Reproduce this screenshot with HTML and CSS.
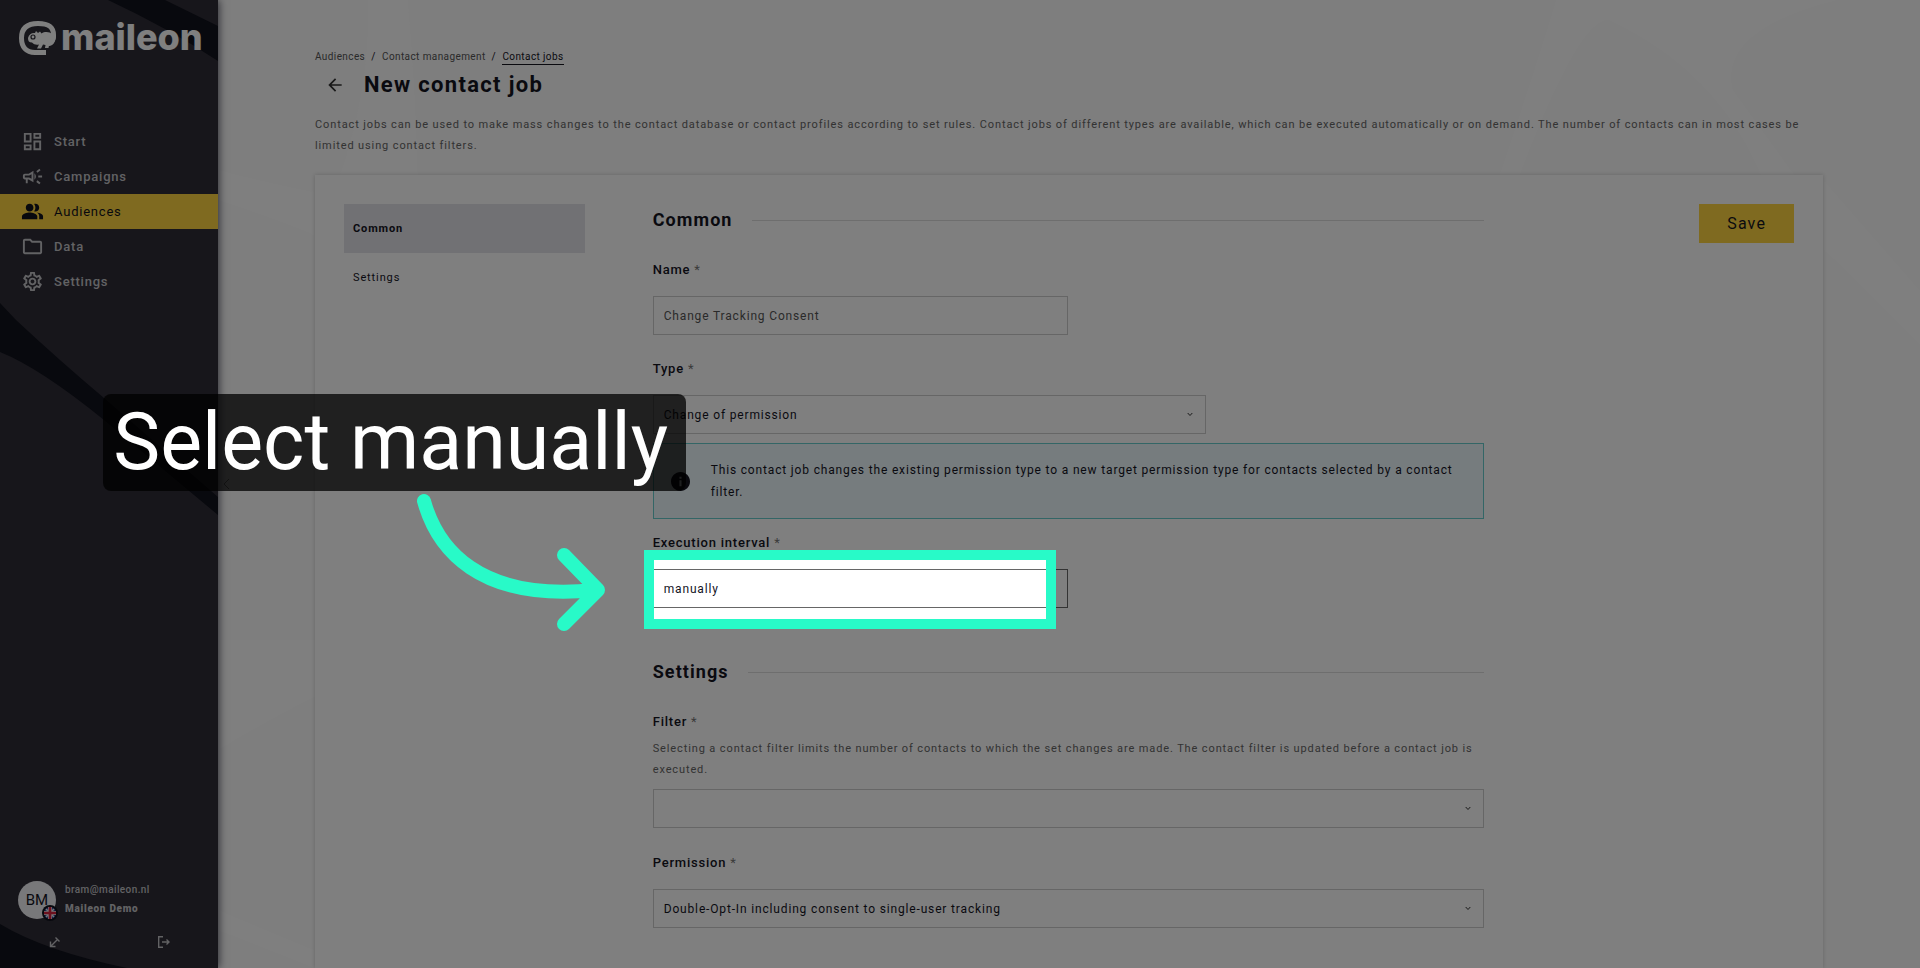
FILE: index.html
```html
<!DOCTYPE html>
<html lang="en">
<head>
<meta charset="utf-8">
<title>New contact job</title>
<link rel="stylesheet" href="styles.css">
</head>
<body>
<div class="app">
  <aside class="sidebar">
    <svg class="sidebar-art" viewBox="0 0 218 968" preserveAspectRatio="none" aria-hidden="true">
      <path d="M108 0H165L218 26V61Q168 28 108 0Z"/>
      <path d="M0 303L16 320Q60 361 104 398L218 497V515L104 420Q40 368 0 352Z"/>
      <path d="M0 924Q45 951 127 968H0Z"/>
    </svg>
    <a class="logo" href="#">
      <svg class="logo-mark" viewBox="0 0 38 36" aria-hidden="true">
        <path class="logo-ring" d="M27 32.500H16C7 32.500 2.500 27 2.500 18C2.500 8 8 3.500 19 3.500C30 3.500 34.500 7 34.500 15C34.500 21 32 24 27 24"/>
        <path class="logo-body" d="M9 18C10 14 13 12.500 16 13L17 11L19 13L21 11.500L22.500 13.500C26 11 31 12 33 14L37 15C37 21 34 25 30 25L29.500 28H26L26.500 25L24 24.500L22 28.500H18L20 24.500C17 25 15 24.500 13 22.500C10 22.500 9 21 9 18Z"/>
        <circle class="logo-eye" cx="14" cy="17" r="2"/>
      </svg>
      <span class="logo-text">maileon</span>
    </a>
    <nav class="nav">
      <a class="nav-item" href="#"><svg viewBox="0 0 24 24" aria-hidden="true"><path d="M19 5v2h-4V5h4M9 5v6H5V5h4m10 8v6h-4v-6h4M9 17v2H5v-2h4M21 3h-8v6h8V3zM11 3H3v10h8V3zm10 8h-8v10h8V11zm-10 4H3v6h8v-6z"/></svg>Start</a>
      <a class="nav-item" href="#"><svg viewBox="0 0 24 24" aria-hidden="true"><path d="M18 11v2h4v-2h-4zm-2 6.610c.96.710 2.210 1.650 3.200 2.390.4-.530.800-1.070 1.200-1.600-.990-.740-2.240-1.680-3.200-2.400-.4.540-.8 1.080-1.200 1.610zM20.400 5.600c-.4-.530-.8-1.070-1.200-1.600-.990.740-2.240 1.680-3.200 2.400.4.530.8 1.070 1.200 1.600.96-.720 2.210-1.650 3.200-2.400zM4 9c-1.100 0-2 .9-2 2v2c0 1.100.9 2 2 2h1v4h2v-4h1l5 3V6L8 9H4zm5.030 1.710L11 9.530v4.940l-1.970-1.180-.480-.290H4v-2h4.550l.480-.290zM15.500 12c0-1.330-.580-2.530-1.500-3.350v6.690c.920-.810 1.500-2.010 1.500-3.340z"/></svg>Campaigns</a>
      <a class="nav-item nav-active" href="#" aria-current="page"><svg viewBox="0 0 24 24" aria-hidden="true"><path d="M16.670 13.130C18.040 14.060 19 15.320 19 17v3h4v-3c0-2.180-3.570-3.470-6.330-3.870zM15 12c2.210 0 4-1.790 4-4s-1.790-4-4-4c-.470 0-.910.100-1.330.240C14.500 5.270 15 6.580 15 8s-.5 2.730-1.330 3.760c.420.140.860.240 1.330.240zM9 12c2.210 0 4-1.790 4-4s-1.790-4-4-4-4 1.790-4 4 1.790 4 4 4zm0 1c-2.670 0-8 1.340-8 4v3h16v-3c0-2.660-5.330-4-8-4z"/></svg>Audiences</a>
      <a class="nav-item" href="#"><svg viewBox="0 0 24 24" aria-hidden="true"><path d="M9.170 6l2 2H20v10H4V6h5.170M10 4H4c-1.100 0-1.990.9-1.990 2L2 18c0 1.100.9 2 2 2h16c1.100 0 2-.9 2-2V8c0-1.100-.9-2-2-2h-8l-2-2z"/></svg>Data</a>
      <a class="nav-item" href="#"><svg viewBox="0 0 24 24" aria-hidden="true"><path d="M19.430 12.980c.040-.320.070-.640.070-.980s-.030-.660-.070-.980l2.110-1.650c.190-.150.240-.420.120-.640l-2-3.460c-.090-.160-.260-.250-.440-.250-.060 0-.120.010-.170.030l-2.490 1c-.520-.4-1.080-.730-1.690-.980l-.380-2.650C14.460 2.180 14.250 2 14 2h-4c-.250 0-.460.180-.490.420l-.380 2.650c-.610.250-1.170.590-1.690.980l-2.490-1c-.060-.020-.120-.030-.180-.030-.170 0-.340.090-.430.250l-2 3.460c-.130.220-.070.490.120.640l2.110 1.650c-.040.320-.070.650-.070.980s.030.660.070.980l-2.110 1.650c-.190.150-.240.420-.120.640l2 3.460c.090.160.260.250.440.250.060 0 .120-.010.170-.030l2.490-1c.520.4 1.080.730 1.690.980l.380 2.650c.030.240.240.420.490.420h4c.250 0 .460-.180.490-.420l.380-2.650c.610-.250 1.170-.590 1.690-.980l2.490 1c.060.020.120.030.180.030.170 0 .340-.090.430-.250l2-3.460c.120-.220.070-.490-.120-.640l-2.110-1.650zm-1.980-1.710c.040.310.050.520.050.730 0 .210-.020.430-.050.730l-.140 1.130.890.700 1.080.840-.7 1.210-1.270-.510-1.040-.420-.9.680c-.430.320-.840.560-1.250.730l-1.060.430-.160 1.130-.2 1.350h-1.400l-.190-1.350-.160-1.130-1.060-.430c-.430-.180-.830-.410-1.230-.710l-.910-.7-1.060.430-1.270.510-.7-1.210 1.080-.840.890-.7-.140-1.130c-.030-.310-.050-.540-.050-.740s.020-.430.050-.730l.140-1.130-.890-.7-1.080-.840.7-1.210 1.270.510 1.040.420.9-.680c.430-.320.840-.560 1.250-.730l1.060-.430.160-1.130.2-1.350h1.390l.190 1.350.160 1.130 1.060.430c.430.180.830.410 1.230.710l.910.7 1.060-.430 1.270-.510.7 1.210-1.070.850-.890.7.140 1.130zM12 8c-2.210 0-4 1.790-4 4s1.790 4 4 4 4-1.790 4-4-1.790-4-4-4zm0 6c-1.100 0-2-.9-2-2s.9-2 2-2 2 .9 2 2-.9 2-2 2z"/></svg>Settings</a>
    </nav>
    <div class="account">
      <div class="account-user">
        <div class="avatar">BM
          <svg class="flag" viewBox="0 0 16 16" role="img" aria-label="English">
            <circle cx="8" cy="8" r="8" fill="#10121c"/>
            <circle cx="8" cy="8" r="6" fill="#2a4a9c"/>
            <path d="M4 4L12 12M12 4L4 12" stroke="#e8e8ee" stroke-width="1.600"/>
            <path d="M8 2V14M2 8H14" stroke="#e8e8ee" stroke-width="4"/>
            <path d="M8 2V14M2 8H14" stroke="#d8203c" stroke-width="2.600"/>
          </svg>
        </div>
        <div class="account-names">
          <span>bram@maileon.nl</span>
          <strong>Maileon Demo</strong>
        </div>
      </div>
      <div class="account-actions">
        <button class="icon-button" type="button" aria-label="Collapse menu"><svg viewBox="0 0 12 12" aria-hidden="true"><path d="M6.500 1.500L10.500 5.500M8.500 3.500L2 10M1.500 5.500V10.500H6.500"/></svg></button>
        <button class="icon-button" type="button" aria-label="Log out"><svg viewBox="0 0 12 12" aria-hidden="true"><path d="M5 .7H.7V11.300H5M4 6H11M8.500 3.500L11 6L8.500 8.500"/></svg></button>
      </div>
    </div>
    <button class="handle" type="button" aria-label="Hide menu"><svg viewBox="0 0 8 12" aria-hidden="true"><path d="M7 1L2 6L7 11"/></svg></button>
  </aside>

  <main class="main">
    <svg class="main-art" viewBox="0 0 1702 968" preserveAspectRatio="none" aria-hidden="true">
      <path d="M1280 180Q1320 60 1338 0H1620Q1500 30 1515 90L1580 180H1545Q1500 70 1390 20Q1360 20 1300 180Z"/>
      <path d="M0 640H110V690Q50 720 0 750Z"/>
      <path d="M0 910L96 950V968L0 930Z"/>
      <path d="M0 170Q60 185 96 192V235Q60 220 0 200Z"/>
      <path d="M150 0H190Q198 90 200 180H120Q152 90 150 0Z"/>
      <path d="M1606 180L1702 290V345L1606 250Z"/>
    </svg>
    <header class="page-head">
      <nav class="crumbs" aria-label="Breadcrumb">
        <a href="#">Audiences</a><span>/</span><a href="#">Contact management</a><span>/</span><a class="crumb-current" href="#">Contact jobs</a>
      </nav>
      <div class="title-row">
        <a class="back" href="#" aria-label="Back"><svg viewBox="0 0 24 24" aria-hidden="true"><path d="M20 11H7.830l5.590-5.590L12 4l-8 8 8 8 1.410-1.410L7.830 13H20v-2z"/></svg></a>
        <h1>New contact job</h1>
      </div>
      <p class="intro">Contact jobs can be used to make mass changes to the contact database or contact profiles according to set rules. Contact jobs of different types are available, which can be executed automatically or on demand. The number of contacts can in most cases be limited using contact filters.</p>
    </header>

    <form class="card">
      <nav class="tabs" aria-label="Sections">
        <a class="tab tab-active" href="#common">Common</a>
        <a class="tab" href="#settings">Settings</a>
      </nav>
      <div class="fields">
        <h2 id="common">Common</h2>
        <div class="field">
          <label for="name">Name <i>*</i></label>
          <input class="control half" id="name" type="text" value="Change Tracking Consent">
        </div>
        <div class="field">
          <label for="type">Type <i>*</i></label>
          <div class="picker two-thirds">
            <select class="control" id="type"><option>Change of permission</option></select>
            <svg class="chevron" viewBox="0 0 6 5" aria-hidden="true"><path d="M.7 1L3 3.500L5.300 1"/></svg>
          </div>
        </div>
        <div class="notice">
          <svg viewBox="0 0 24 24" aria-hidden="true"><path d="M12 0C5.400 0 0 5.400 0 12s5.400 12 12 12 12-5.400 12-12S18.600 0 12 0zm1.300 18h-2.600v-7.500h2.600V18zm0-9.500h-2.600V6h2.600v2.500z"/></svg>
          <p>This contact job changes the existing permission type to a new target permission type for contacts selected by a contact filter.</p>
        </div>
        <div class="field field-interval">
          <label for="interval">Execution interval <i>*</i></label>
          <div class="picker half">
            <select class="control control-dark" id="interval"><option>manually</option></select>
            <svg class="chevron" viewBox="0 0 6 5" aria-hidden="true"><path d="M.7 1L3 3.500L5.300 1"/></svg>
            <div class="spotlight"></div>
            <div class="callout" role="note">Select manually</div>
            <svg class="arrow" viewBox="0 0 200 150" aria-hidden="true"><path d="M14 17C27 64 68 118 185 106M154 71L188 106L154 140"/></svg>
          </div>
        </div>
        <h2 id="settings">Settings</h2>
        <div class="field field-help">
          <label for="filter">Filter <i>*</i></label>
          <p class="help">Selecting a contact filter limits the number of contacts to which the set changes are made. The contact filter is updated before a contact job is executed.</p>
          <div class="picker">
            <select class="control" id="filter"><option></option></select>
            <svg class="chevron" viewBox="0 0 6 5" aria-hidden="true"><path d="M.7 1L3 3.500L5.300 1"/></svg>
          </div>
        </div>
        <div class="field">
          <label for="permission">Permission <i>*</i></label>
          <div class="picker">
            <select class="control" id="permission"><option>Double-Opt-In including consent to single-user tracking</option></select>
            <svg class="chevron" viewBox="0 0 6 5" aria-hidden="true"><path d="M.7 1L3 3.500L5.300 1"/></svg>
          </div>
        </div>
      </div>
      <button class="save" type="button">Save</button>
    </form>
  </main>
</div>
</body>
</html>
```
FILE: styles.css
```css
* { box-sizing: border-box; letter-spacing: .07em; }

body {
  margin: 0;
  font-family: Roboto, "Liberation Sans", sans-serif;
  font-size: 12px;
  color: #14141f;
  background: #fcfcfc;
}

a { color: inherit; text-decoration: none; }
h1, h2, p { margin: 0; }
h1, h2, label, .nav-item { letter-spacing: .06em; }
button { font: inherit; border: 0; cursor: pointer; }

.app { display: flex; min-height: 100vh; overflow: hidden; }

/* Sidebar */
.sidebar {
  position: relative;
  z-index: 2;
  flex: 0 0 218px;
  display: flex;
  flex-direction: column;
  background: #2e2c36;
  color: #c4c4c8;
  box-shadow: 1px 0 8px rgba(20, 20, 40, .7);
}
.sidebar-art { position: absolute; inset: 0; width: 100%; height: 100%; fill: #10121c; }
.logo { position: relative; display: flex; align-items: center; gap: 4px; height: 36px; margin: 20px 0 0 19px; color: #fff; }
.logo-mark { width: 38px; height: 36px; flex: none; }
.logo-ring { fill: none; stroke: #fff; stroke-width: 5; }
.logo-body { fill: #fff; }
.logo-eye { fill: none; stroke: #2e2c36; stroke-width: 1.2; }
.logo-text { font-family: Inter, "Liberation Sans", sans-serif; font-size: 36px; font-weight: 800; line-height: 34px; padding-bottom: 2px; letter-spacing: 0; }

.nav { position: relative; margin-top: 68px; }
.nav-item { display: flex; align-items: center; gap: 10px; height: 35px; padding-left: 21px; font-size: 13px; font-weight: 500; }
.nav-item svg { width: 23px; height: 23px; fill: currentColor; }
.nav-active { background: #ffd440; color: #10121c; font-weight: 400; }

.account { position: relative; margin-top: auto; padding: 0 18px 20px; }
.account-user { display: flex; align-items: center; gap: 9px; }
.avatar { position: relative; width: 38px; height: 38px; border-radius: 50%; background: #f0f0f4; color: #14141f; font-size: 15px; line-height: 38px; text-align: center; letter-spacing: 0; }
.flag { position: absolute; right: -2px; bottom: -2px; width: 16px; height: 16px; }
.account-names { display: flex; flex-direction: column; gap: 7px; padding-bottom: 2px; font-size: 10px; line-height: 12px; font-weight: 500; }
.account-names span { letter-spacing: .04em; }
.account-names strong { font-weight: 900; }
.account-actions { display: flex; justify-content: space-between; padding: 17px 30px 0 31px; }
.icon-button { width: 12px; height: 12px; padding: 0; background: none; color: inherit; }
.icon-button svg { display: block; width: 12px; height: 12px; fill: none; stroke: currentColor; stroke-width: 1.4; }
.handle { position: absolute; left: 222px; top: 50%; width: 8px; height: 12px; padding: 0; background: none; color: #888; transform: translateY(-50%); }
.handle svg { display: block; fill: none; stroke: currentColor; }

/* Page */
.main { position: relative; flex: 1; min-width: 0; display: flex; flex-direction: column; padding: 49px 97px 0; }
.main-art { position: absolute; inset: 0; width: 100%; height: 100%; fill: #fefefe; }
.page-head { position: relative; }
.crumbs { display: flex; gap: 6px; font-size: 10px; line-height: 15px; color: #555; }
.crumbs a { letter-spacing: .04em; }
.crumbs span { color: #14141f; }
.crumb-current { color: #14141f; border-bottom: 1px solid #14141f; }
.title-row { display: flex; align-items: center; gap: 19px; height: 28px; margin-top: 6px; padding-left: 10px; }
.back svg { display: block; width: 20px; height: 20px; fill: #333; }
h1 { font-size: 22px; line-height: 28px; font-weight: 700; }
.intro { margin-top: 15px; font-size: 11px; line-height: 21px; letter-spacing: .08em; color: #666; }

.card {
  flex: 1;
  position: relative;
  display: flex;
  align-items: flex-start;
  margin-top: 19px;
  padding: 29px 29px 40px;
  background: #fff;
  box-shadow: 0 0 4px rgba(0, 0, 0, .2);
}
.tabs { width: 16.6%; flex: none; }
.tab { display: block; padding: 0 9px; font-size: 11px; line-height: 49px; letter-spacing: .08em; }
.tab-active { background: #e2e2e8; font-weight: 700; }
.fields { width: 57.3%; margin-left: 68px; }
.save { margin-left: auto; padding: 0 28px; line-height: 39px; font-size: 16px; font-weight: 400; background: #ffd440; color: #14141f; }

h2 { display: flex; align-items: center; gap: 19px; font-size: 18px; line-height: 32px; font-weight: 700; }
h2::after { content: ""; flex: 1; height: 1px; background: #ddd; }
.field { padding-top: 24px; }
.field label { display: block; margin-bottom: 16px; font-size: 13px; line-height: 20px; font-weight: 500; }
.field i { font-style: normal; font-weight: 400; color: #777; }
.half { width: 50%; }
.two-thirds { width: 66.6%; }
.picker { position: relative; }
.control {
  display: block;
  height: 39px;
  padding: 0 10px;
  border: 1px solid #ccc;
  border-radius: 0;
  background: #fff;
  color: #14141f;
  font: inherit;
  appearance: none;
}
select.control { width: 100%; }
input.control { color: #555; }
.control-dark { border-color: #666; }
.chevron { position: absolute; right: 13px; top: 17px; width: 6px; height: 5px; fill: none; stroke: #333; pointer-events: none; }
.notice { display: flex; align-items: center; gap: 21px; margin-top: 9px; padding: 15px 17px; border: 1px solid #6cc; background: #ecf8fc; }
.notice svg { flex: none; width: 19px; height: 19px; fill: #14141f; }
.notice p { line-height: 22px; }
.field-interval { padding-top: 14px; padding-bottom: 48px; }
.field-help { padding-bottom: 1px; }
.field-help label { margin-bottom: 6px; }
.help { margin-bottom: 9px; font-size: 11px; line-height: 21px; letter-spacing: .08em; color: #666; }

/* Guided step */
.spotlight {
  position: absolute;
  z-index: 10;
  inset: -19px 12px -21px -9px;
  border: 10px solid #28fac8;
  box-shadow: 0 0 0 3000px rgba(0, 0, 0, .5);
  pointer-events: none;
}
.callout {
  position: absolute;
  z-index: 11;
  right: 382px;
  bottom: 117px;
  padding: 0 18px 0 10px;
  border-radius: 8px;
  background: rgba(0, 0, 0, .75);
  color: #fff;
  font-size: 79px;
  line-height: 97px;
  letter-spacing: 0;
  white-space: nowrap;
}
.arrow { position: absolute; z-index: 11; left: -243px; top: -85px; width: 200px; height: 150px; fill: none; stroke: #28fac8; stroke-width: 14; stroke-linecap: round; stroke-linejoin: round; }
```
